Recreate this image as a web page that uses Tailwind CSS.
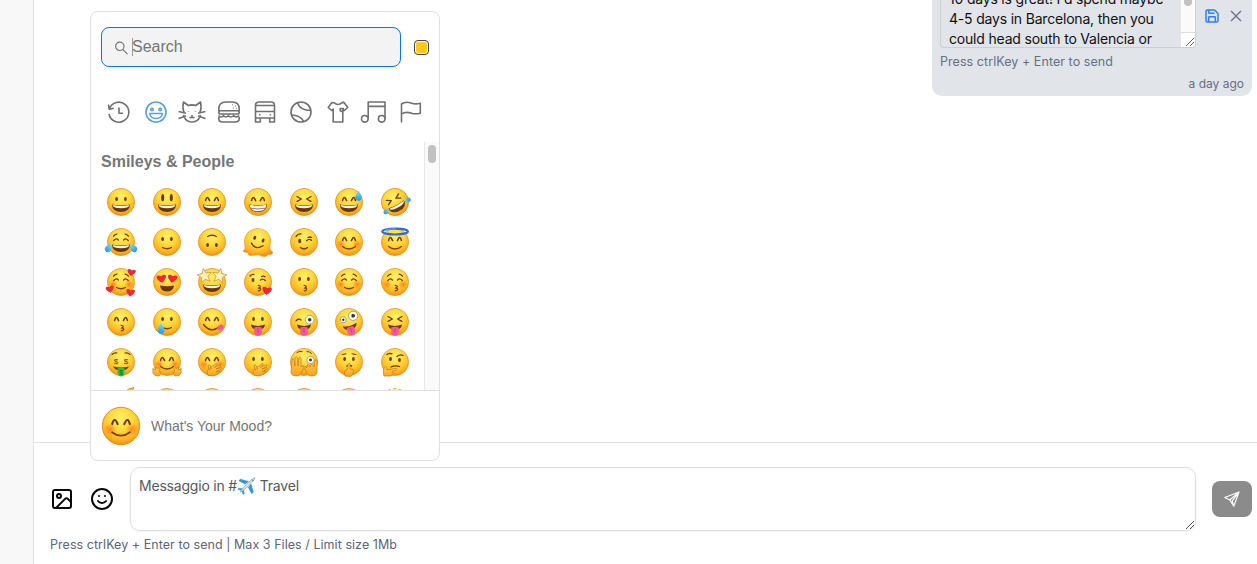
<!DOCTYPE html>
<html lang="it">
<head>
<meta charset="utf-8">
<title>Travel chat</title>
<script src="https://cdn.jsdelivr.net/npm/@tailwindcss/browser@4"></script>
</head>
<body class="w-[1257px] h-[564px] overflow-hidden bg-white font-['Inter',sans-serif]">
<svg width="0" height="0" class="absolute">
<defs>
<radialGradient id="skin" cx=".5" cy=".3" r=".72"><stop offset="0" stop-color="#fff06a"/><stop offset=".45" stop-color="#ffd83a"/><stop offset=".8" stop-color="#fdb022"/><stop offset="1" stop-color="#ee8a0c"/></radialGradient>
<radialGradient id="blush"><stop offset="0" stop-color="#ff6a1c" stop-opacity=".75"/><stop offset="1" stop-color="#ff7a1c" stop-opacity="0"/></radialGradient>
<linearGradient id="hand" x1="0" y1="0" x2="0" y2="1"><stop offset="0" stop-color="#ffd84a"/><stop offset="1" stop-color="#f8a01e"/></linearGradient>
<linearGradient id="drop" x1="0" y1="0" x2="0" y2="1"><stop offset="0" stop-color="#8fdcfb"/><stop offset="1" stop-color="#199be3"/></linearGradient>
<g id="face"><circle cx="16" cy="16" r="13.600" fill="url(#skin)" stroke="#e58a1c" stroke-width=".7"/></g>
<g id="eyes" fill="#68380b"><ellipse cx="11.600" cy="13" rx="1.350" ry="2.100"/><ellipse cx="20.400" cy="13" rx="1.350" ry="2.100"/></g>
<g id="tall" fill="#68380b"><ellipse cx="11.700" cy="11.700" rx="1.500" ry="3.600"/><ellipse cx="20.300" cy="11.700" rx="1.500" ry="3.600"/></g>
<g id="happy" fill="none" stroke="#68380b" stroke-width="1.500" stroke-linecap="round"><path d="M9.600 14.600q1.500-6 4 0M18.400 14.600q2.500-6 4 0"/></g>
<g id="squint" fill="none" stroke="#68380b" stroke-width="1.300" stroke-linecap="round" stroke-linejoin="round"><path d="M9 10.500l4.400 2.500L9 15.300M23 10.500L18.600 13l4.400 2.300"/></g>
<g id="closed" fill="none" stroke="#68380b" stroke-width="1.200" stroke-linecap="round"><path d="M8.700 14.500q2.300-2.800 4.700-.5M18.600 14q2.400-2.300 4.700.5M8.500 10.200q1.400-1.700 3.400-2M23.500 10.200q-1.400-1.700-3.400-2"/></g>
<g id="grin"><path d="M6.900 18.500Q16 20.300 25.100 18.500Q24.500 26 16 26Q7.500 26 6.900 18.500Z" fill="#67370a"/><path d="M7.700 19.100Q16 20.800 24.300 19.100Q24 22.300 16 22.300Q8 22.300 7.700 19.100Z" fill="#f0f2f4"/></g>
<g id="smile" fill="none" stroke="#7a430d" stroke-width="1.300" stroke-linecap="round"><path d="M11.500 21.500q4.500 2.500 9 0"/></g>
<g id="bigsmile" fill="none" stroke="#7a430d" stroke-width="1.300" stroke-linecap="round"><path d="M9.500 20.500q6.500 5 13 0"/></g>
<g id="kiss" fill="none" stroke="#7a430d" stroke-width="1.300" stroke-linecap="round"><path d="M16.200 19.400q3 .5 1.700 1.900l-1 .7q3 .8 1 2.300l-1.600.5"/></g>
<g id="cheeks"><circle cx="8" cy="18.300" r="4.700" fill="url(#blush)"/><circle cx="24" cy="18.300" r="4.700" fill="url(#blush)"/></g>
<g id="tongue"><path d="M9 18.600Q16 21.500 23 18.600Q22.500 23.800 16 23.800T9 18.600Z" fill="#67370a"/><path d="M12.200 21.500Q16 19.800 19.800 21.500V26Q19.300 29.800 16 29.800T12.200 26Z" fill="#f9549c"/><path d="M16 22v4.500" stroke="#d42d78" stroke-width=".8"/></g>
<path id="heart" d="M0 4C-7-1-4.300-5 0-2C4.300-5 7-1 0 4Z" fill="#ef2637"/>
<path id="star" d="M0-6.200L1.700-2L6.200-1.600L2.800 1.400L3.900 5.800L0 3.400L-3.900 5.800L-2.800 1.400L-6.200-1.600L-1.700-2Z" fill="#fff0b8" stroke="#c98f36" stroke-width=".6"/>
<path id="tear" d="M0-5Q4 1 3.200 3Q2.200 5.400 0 5.400T-3.200 3Q-4 1 0-5Z" fill="url(#drop)"/>
</defs>
</svg>

<div class="relative flex h-[564px]">
  <aside class="w-[34px] shrink-0 border-r border-[#e2e2e4] bg-[#f8f8f8]"></aside>
  <main class="flex min-w-0 flex-1 flex-col">
    <section class="flex h-[442px] items-start justify-end overflow-hidden pr-[5px]">
      <article class="flex h-24 w-80 flex-col rounded-b-[10px] bg-[#e1e4e9] px-2">
        <div class="flex h-12 items-start">
          <div class="flex h-12 w-64 overflow-hidden rounded-b border border-t-0 border-[#cbced3] pl-2">
            <p class="-mt-[11px] h-[60px] w-[231px] shrink-0 whitespace-nowrap text-sm leading-5 tracking-[-0.19px] text-[#111]">10 days is great! I'd spend maybe<br>4-5 days in Barcelona, then you<br>could head south to Valencia or</p>
            <div class="flex w-[15px] shrink-0 flex-col border-l border-[#e6e6e6] bg-[#fafafa]">
              <div class="flex h-8 justify-center"><span class="h-[6px] w-2 rounded-b-full bg-[#c1c1c1]"></span></div>
              <div class="flex h-[15px] items-end justify-end border-t border-[#ddd] bg-white"><svg class="size-3" viewBox="0 0 12 12" fill="none" stroke="#555" stroke-width=".9"><path d="M3 11l8-8M7 11l4-4"/></svg></div>
            </div>
          </div>
          <div class="flex gap-2 pt-2 pl-2">
            <svg class="size-4" viewBox="0 0 24 24" fill="none" stroke="#3478f6" stroke-width="2.200" stroke-linecap="round" stroke-linejoin="round"><path d="M15.200 3a2 2 0 0 1 1.400.6l3.800 3.800a2 2 0 0 1 .6 1.400V19a2 2 0 0 1-2 2H5a2 2 0 0 1-2-2V5a2 2 0 0 1 2-2zM17 21v-7a1 1 0 0 0-1-1H8a1 1 0 0 0-1 1v7M7 3v4a1 1 0 0 0 1 1h7"/></svg>
            <svg class="size-4" viewBox="0 0 24 24" fill="none" stroke="#6b7280" stroke-width="2" stroke-linecap="round"><path d="M5 5l14 14M19 5L5 19"/></svg>
          </div>
        </div>
        <p class="mt-1 whitespace-nowrap text-[12.5px] leading-5 tracking-[0.06px] text-[#667085]">Press ctrlKey + Enter to send</p>
        <time class="mt-[2px] text-right text-xs leading-5 text-[#667085]">a day ago</time>
      </article>
    </section>
    <footer class="h-[122px] border-t border-[#e2e2e4] pt-6 pl-4 pr-[5px]">
      <div class="flex h-16 items-center">
        <svg class="size-6" viewBox="0 0 24 24" fill="none" stroke="#09090b" stroke-width="2" stroke-linecap="round" stroke-linejoin="round"><rect x="3" y="3" width="18" height="18" rx="2"/><circle cx="9" cy="9" r="2"/><path d="M21 15l-3.100-3.100a2 2 0 0 0-2.800 0L6 21"/></svg>
        <svg class="ml-4 size-6" viewBox="0 0 24 24" fill="none" stroke="#09090b" stroke-width="2" stroke-linecap="round"><circle cx="12" cy="12" r="10"/><path d="M8 14s1.500 2 4 2 4-2 4-2M9 9h.01M15 9h.01"/></svg>
        <div class="ml-4 flex h-16 w-[1066px] justify-between rounded-[10px] border border-[#dedee1] pl-2 shadow-xs">
          <p class="mt-2 flex h-5 items-center text-sm leading-5 tracking-[-0.2px] whitespace-pre text-[#58585c]">Messaggio in #<svg class="h-5 w-[19px]" viewBox="0 0 20 20"><g stroke-linejoin="round"><path d="M8.500 8L2 4.500L3.500 2.800L12 5.300zM12 11.500L15.500 18L17.200 16.500L14.700 8z" fill="#2b9bdc" stroke="#207bb7" stroke-width=".5"/><path d="M6.500 13L2 12.300L1 13.500L5.200 15zM7 13.500L7.700 18L6.500 19L5 15z" fill="#2b9bdc" stroke="#207bb7" stroke-width=".4"/><path d="M3.500 16.500Q5 12.500 14 4.500Q17.500 1.500 19 1.200Q18.800 3 15.500 6.500Q7.500 15 3.500 16.500Z" fill="#d8e0e6" stroke="#8e9ba5" stroke-width=".7"/><path d="M15.700 3.200l1.400 1.400" stroke="#345a74"/></g></svg> Travel</p>
          <svg class="size-3 self-end" viewBox="0 0 12 12" fill="none" stroke="#444" stroke-width=".9"><path d="M3 11l8-8M7 11l4-4"/></svg>
        </div>
        <button class="ml-4 flex h-9 w-10 items-center justify-center rounded-lg bg-[#8b8b8b]"><svg class="size-4" viewBox="0 0 16 16" fill="none" stroke="#fff" stroke-width="1.100" stroke-linejoin="round"><path d="M15 1L.8 6.500L5.800 9L9.800 15.200ZM15 1L5.800 9M15 1L8.200 10.200L9.800 15.200"/></svg></button>
      </div>
      <p class="mt-1 whitespace-nowrap text-[12.5px] leading-5 tracking-[0.05px] text-[#5c6579]">Press ctrlKey + Enter to send | Max 3 Files / Limit size 1Mb</p>
    </footer>
  </main>

  <div class="absolute top-[11px] left-[90px] flex h-[450px] w-[350px] flex-col overflow-hidden rounded-lg border border-[#e0e0e0] bg-white font-['Liberation_Sans',sans-serif]">
    <div class="flex h-[70px] items-center pl-[10px]">
      <div class="flex h-10 w-[300px] items-center rounded-lg border border-[#0b76e8] bg-[#f3f3f3] pl-3">
        <svg class="size-[15px]" viewBox="0 0 15 15" fill="none" stroke="#767676" stroke-width="1.200" stroke-linecap="round"><circle cx="5.800" cy="6.300" r="4.200"/><path d="M9 9.600l4.200 4.200"/></svg>
        <span class="ml-[3px] h-[18px] w-px bg-[#999]"></span><span class="-ml-px text-base text-[#757575]">Search</span>
      </div>
      <span class="ml-[13px] size-[15px] rounded border border-[#444] bg-[#ffc91f] shadow-[inset_0_0_0_1px_#fff]"></span>
    </div>
    <nav id="categories" class="mx-[10px] mt-[14px] grid h-8 w-[328px] grid-cols-9 items-center"></nav>
    <div class="mt-[14px] flex h-[248px] shrink-0 overflow-hidden">
      <div class="w-[333px] shrink-0">
        <h2 class="h-10 pl-[10px] text-base leading-10 font-bold text-[#767676]">Smileys &amp; People</h2>
        <div id="emojis" class="ml-[7px] grid w-[320px] grid-cols-7"></div>
      </div>
      <div class="flex w-[15px] justify-center border-l border-[#e8e8e8] bg-[#fafafa] pt-[3px]"><span class="h-[18px] w-2 rounded-full bg-[#c1c1c1]"></span></div>
    </div>
    <div class="flex h-[70px] shrink-0 items-center border-t border-[#e0e0e0] pl-[8px]">
      <svg class="size-[44px]" viewBox="0 0 32 32"><use href="#face"/><use href="#cheeks"/><use href="#happy"/><use href="#bigsmile"/></svg>
      <p class="ml-2 text-sm text-[#767676]">What's Your Mood?</p>
    </div>
  </div>
</div>
<script>
const u = (...ids) => ids.map(i => `<use href="#${i}"/>`).join('');
const b = (d, w = 1.3, c = '#68380b') => `<path d="${d}" fill="none" stroke="${c}" stroke-width="${w}" stroke-linecap="round" stroke-linejoin="round"/>`;
const at = (id, x, y, s = 1, r = 0) => `<use href="#${id}" transform="translate(${x} ${y}) rotate(${r}) scale(${s})"/>`;
const h = d => `<path d="${d}" fill="url(#hand)" stroke="#c8741a" stroke-width=".7" stroke-linejoin="round"/>`;
const eye = (x, y, r) => `<circle cx="${x}" cy="${y}" r="${r}" fill="#fff" stroke="#8d8479" stroke-width=".7"/><circle cx="${x}" cy="${y}" r="${r * .4}" fill="#3d3029"/>`;
const handOnMouth = h('M12 29.500Q10 25 12.500 23L20.500 17.500Q22 17.500 21 19L18 21.500L24 18.800Q25.500 19 24.500 20.200L20 23L25 21.500Q26.200 22 25 23L20.500 25.500L23.500 25Q24.500 25.700 23 26.700L18 30Z') + h('M13 24l-1-4.500q1-1.500 2 0l1.500 3z');
const emojis = [
  u('face','eyes','grin'),
  u('face','tall','grin'),
  u('face','happy','grin'),
  u('face','happy','grin') + '<path d="M7.700 19.100Q16 20.800 24.300 19.100Q24 25.300 16 25.300Q8 25.300 7.700 19.100Z" fill="#f0f2f4"/>' + b('M8.500 22.300Q16 23.600 23.500 22.300', .9, '#8a7a70'),
  u('face','squint','grin'),
  u('face','happy','grin') + at('tear', 25.5, 9.5, 1),
  `<g transform="rotate(-28 16 16)">${u('face','squint','grin')}${at('tear', 4.5, 20, .7, 70)}${at('tear', 27.5, 20, .7, -70)}</g>`,
  u('face','closed','grin') + at('tear', 4, 21.500, .95, 35) + at('tear', 28, 21.500, .95, -35),
  u('face','eyes','smile'),
  u('face') + `<g transform="rotate(180 16 16)">${u('eyes','smile')}</g>`,
  '<path d="M3 21Q.5 9 8.500 4.600Q16 0 24 5Q31 11 27.500 21Q28 24 30.500 26Q31 29 26 28.500L24 30.300Q20 31 17 29L8 29.500Q5 29 7 27L2 26Q0 24 3 23.500Z" fill="url(#skin)" stroke="#e58a1c" stroke-width=".5"/><g transform="rotate(18 16 16)">' + u('eyes') + b('M10 19q6 6 12-1') + '</g>',
  u('face') + '<ellipse cx="11.700" cy="15" rx="1.500" ry="2.200" fill="#68380b"/>' + b('M8 10.500q2-2.800 5-2.500M18.500 14.800q2.400-2.500 5-.5M20 11.500q2-1 3.500 0M12.500 21.500q3.500 3 7 0'),
  u('face','cheeks','happy','bigsmile'),
  u('face','happy','bigsmile') + '<ellipse cx="16" cy="5.600" rx="12.800" ry="2.900" fill="none" stroke="#2d6ae0" stroke-width="2.200"/>' + b('M5 5.200Q8 3 16 2.800', .8, '#74b9ff'),
  u('face','cheeks','closed','smile') + at('heart', 26.500, 6.300, .95, 10) + at('heart', 5, 23, .95, -12) + at('heart', 25.500, 26.500, 1, 8),
  u('face') + at('heart', 10.500, 12.500, 1.100, -7) + at('heart', 21.500, 12.500, 1.100, 7) + '<path d="M9 19.500q7 1.500 14 0q-.7 6-7 6t-7-6z" fill="#67370a"/>',
  u('face','grin') + at('star', 8.500, 9.500, 1.150, -10) + at('star', 23.500, 9.500, 1.150, 10),
  u('face','kiss') + '<ellipse cx="11" cy="14" rx="1.400" ry="2.100" fill="#68380b"/>' + b('M8 10q2-2 4-1.600M18.500 14q2.500-2 4.800.5M19.500 10.500q2-1 3.500.3') + at('heart', 25, 24.500, 1.100, 8),
  u('face','eyes','kiss'),
  u('face','cheeks','closed','smile'),
  u('face','cheeks','closed','kiss'),
  u('face','happy','kiss'),
  u('face','eyes','smile') + at('tear', 10, 22, 1.050),
  u('face','happy') + b('M7.500 18.500Q15 28 23.500 20.500') + '<ellipse cx="24.500" cy="21.500" rx="3.200" ry="2.600" fill="#f9549c" transform="rotate(-30 24.500 21.500)"/>',
  u('face','eyes','tongue'),
  u('face','tongue') + b('M8 15q2-3 5-1') + eye(21.700, 13.700, 4.300),
  u('face') + `<g transform="rotate(-14 16 16)">${u('tongue')}${eye(11, 12.500, 3)}${eye(21.500, 11, 4.600)}</g>`,
  u('face','squint','tongue'),
  u('face') + '<path d="M8 20.500q8 2 16 0q-2 4-8 4t-8-4z" fill="#67370a"/><path d="M12.500 22h7v5q-.5 3.500-3.500 3.500t-3.500-3.500z" fill="#35b944"/><g font-family="Liberation Sans" text-anchor="middle"><text x="11" y="17.500" font-size="8" fill="#68380b">$</text><text x="21" y="17.500" font-size="8" fill="#68380b">$</text><text x="16" y="29" font-size="6.500" fill="#126b27">$</text></g>' + b('M7 8.500q2-2 5-1.500M20 7q3-.5 5 1.500', 1.100),
  u('face','cheeks','happy','bigsmile') + h('M4 29.500Q1 27 2 24Q1 21.500 3 23L4.500 24V21Q6 20 6.500 23L8 21.500Q9.500 22 8.500 25Q11 28 8 30Z') + h('M28 29.500Q31 27 30 24Q31 21.500 29 23L27.500 24V21Q26 20 25.500 23L24 21.500Q22.500 22 23.500 25Q21 28 24 30Z'),
  u('face','cheeks','happy') + handOnMouth,
  u('face','eyes') + handOnMouth,
  u('face') + b('M9 6.500q2-1.700 5-1M19 5.500q3 0 4.500 1.800', 1) + eye(22.500, 14, 3.600) + h('M3 27L4 14Q5 11 6 14L7 20V12Q8.500 9 9.500 12L10 20L10.800 12Q12.500 10 13 13L13 21L15 19Q16 21 14.500 25Q13 30 8 30Q4 30 3 27Z') + h('M29 27L29 15Q28 12 27 15L26 21L25 19.500Q23.500 17 22.500 19.500L22 21L21 19Q19.500 17 19 20L19 22L17 20Q16 21 17.500 25Q19 30 24 30Q28 30 29 27Z'),
  u('face','eyes') + b('M9 8.500l4-.7M19 7.800l4 .7', 1) + b('M14 20q2-1.500 4.500 0', 1.500) + h('M12 30L11.500 26Q12 23.500 14.300 23.500L15.200 18Q16.300 16.500 17 18L17 23L20 23.500Q21 25.500 20 28L18 30.500Z'),
  u('face') + b('M8 8.500q2.500-2 5-.7M18 10.500q3-2.500 6-1M12 21q4.500-2 8.500-.5') + '<ellipse cx="11.500" cy="13" rx="1.400" ry="2" fill="#68380b"/><ellipse cx="20.500" cy="14" rx="1.400" ry="2" fill="#68380b"/>' + h('M5 30Q3.500 26 5 22Q6 19.500 7.500 21.500L8 24L17 22.300Q19 23 17 24.300L13 25.500Q16 28 12 30Z'),
  h('M20 6Q23 2 29 1.500L26 7Z'),
  u('face'), u('face'), u('face'), u('face'), u('face'),
  '<circle cx="16" cy="16" r="13.300" fill="none" stroke="#fcc52b" stroke-width="1.500" stroke-dasharray="4 2"/>'
];
document.getElementById('emojis').innerHTML = emojis.map(e => `<div class="flex h-10 items-center justify-center"><svg class="size-8 shrink-0 overflow-visible" viewBox="0 0 32 32">${e}</svg></div>`).join('');
const cats = [
  '<path d="M5.500 8.500A10 10 0 1 1 5 14M4.500 4.500l.7 4.700 4.600-1M15 7.500v5.700h4.200"/>',
  '<g stroke="#5a9fe0"><circle cx="15" cy="12" r="10"/><circle cx="11" cy="9.500" r="1.200"/><circle cx="19.200" cy="9.500" r="1.200"/><path d="M8.800 13.500h12.600q-.7 5-6.300 5t-6.300-5z"/></g>',
  '<path d="M7 12.500Q5 7 6.500 2L11.300 5.500Q15 4.200 18.700 5.500L23.500 2Q25 7 23 12.500M6.500 15q2 7 8.500 7t8.500-7M1.500 11.500l7.500 1.800M1.500 18.500l7.500-2.500M28.500 11.500L21 13.300M28.500 18.500L21 16M12.500 17q1.800 1.500 2.500-.3q.7 1.800 2.500.3M15 15v1.500M11.500 11v.6M18.500 11v.6"/>',
  '<path d="M4.800 10.800V9q0-7 7-7h6.400q7 0 7 7v1.800zM5.500 11q-1.500 1.500 0 3h19q1.500-1.500 0-3M4.500 15.500q2.500 3 5 .2q2.500 2.500 5 0q2.500 2.500 5 0q3 2.500 5.800-.2M4.800 17v1.500q0 3.500 4 3.500h12.400q4 0 4-3.500V17M18 4.700h.6M21 6h.6M19 8h.6M22.200 8.500h.6"/>',
  '<path d="M5.500 18V5.500q0-3.500 3.500-3.500h12q3.500 0 3.500 3.500V18zM5.500 5.500h19M5.500 11.500h19M5.500 18v4h4.800v-4M24.500 18v4h-4.800v-4M9 14.700h1.400M19.700 14.700h1.400"/>',
  '<circle cx="15" cy="12" r="10"/><path d="M11.500 2.800Q14 10.500 24.800 10.500M5.500 15Q14 15 17.800 21.500"/>',
  '<path d="M11 2.700q4 3.600 8 0l2-.2 3.800 5-3.500 3-1.500-1.500V22h-9.600V9l-1.500 1.500-3.500-3 3.800-5zM17.200 8.500h3.200v2.200q-1.600 1.500-3.200 0zM20 2.800V1.500"/>',
  '<circle cx="5.800" cy="18.800" r="3.300"/><circle cx="22.700" cy="18.800" r="3.300"/><path d="M9.200 18.500V2h16.800v16.500M9.200 6.400h16.800"/>',
  '<path d="M5.500 22.500V4q4-3 9.500-1 4.500 1.700 9.300.2v10q-5 1.300-9.500-.3-5-1.500-9.300 1"/>'
];
document.getElementById('categories').innerHTML = cats.map(c => `<div class="flex justify-center"><svg class="h-[24px] w-[30px] shrink-0" viewBox="0 0 30 24" fill="none" stroke="#707070" stroke-width="1.600" stroke-linejoin="round">${c}</svg></div>`).join('');
</script>
</body>
</html>
